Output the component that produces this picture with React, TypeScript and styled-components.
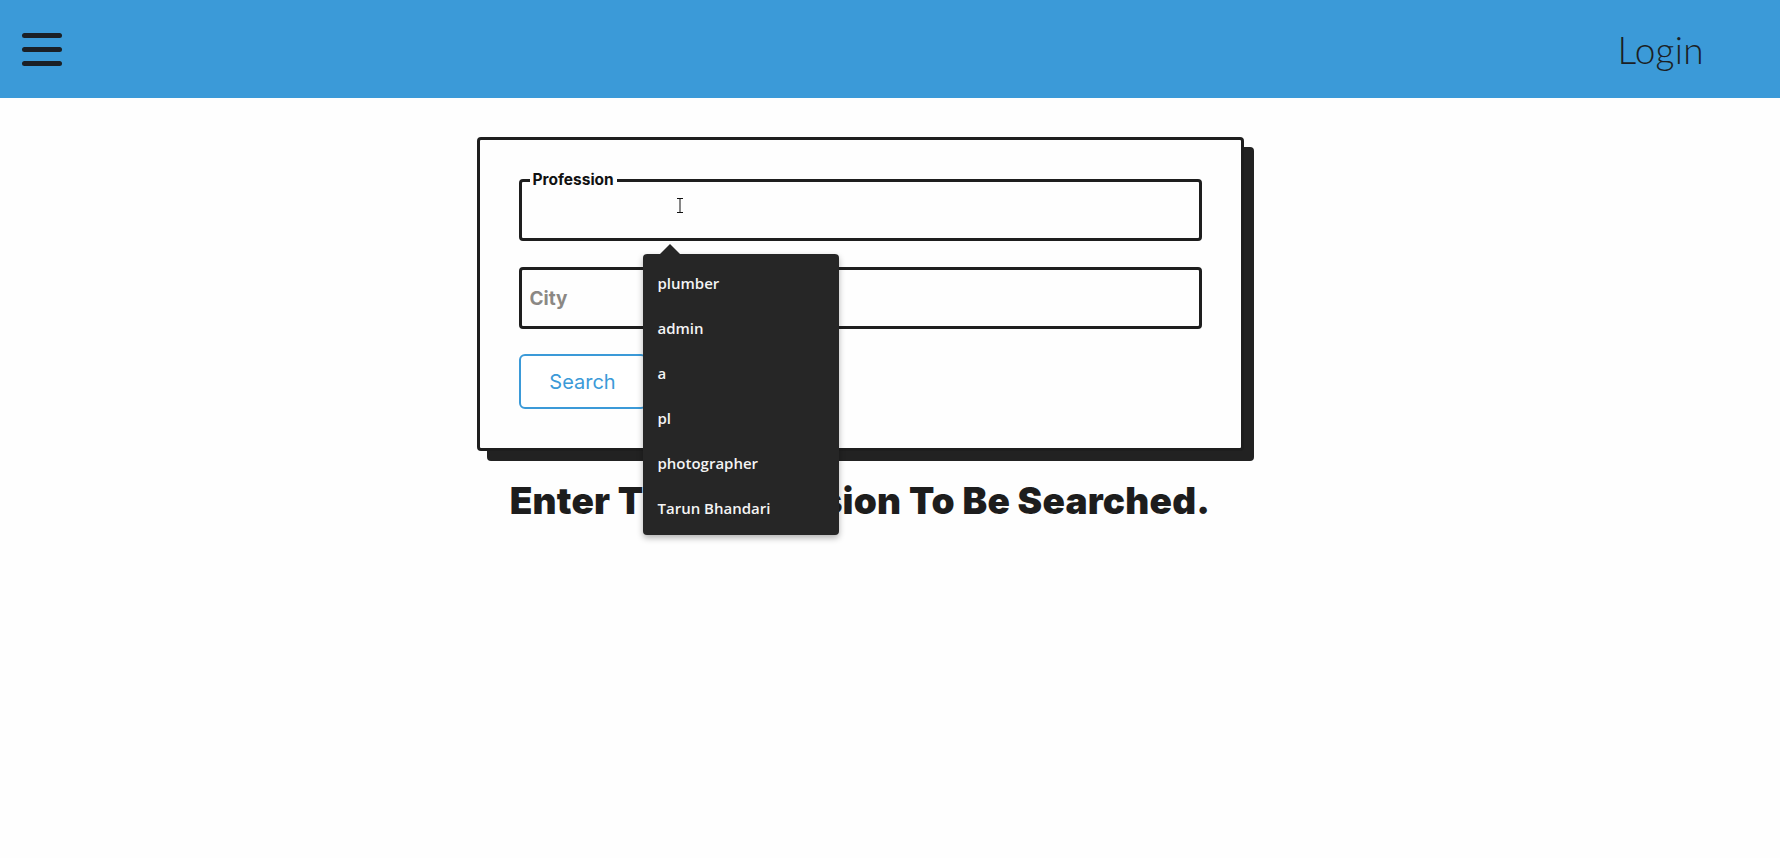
import React from "react";
import styled, { createGlobalStyle } from "styled-components";

const GlobalStyle = createGlobalStyle`
  html, body { margin: 0; padding: 0; background: #fefefe; }
  body { font-family: Inter, "Liberation Sans", sans-serif; }
  * { box-sizing: border-box; }
`;

const Page = styled.div`
  min-height: 100vh;
  display: flex;
  flex-direction: column;
`;

const Header = styled.header`
  height: 98px;
  flex: none;
  background: #3b9ad8;
  display: flex;
  align-items: center;
  justify-content: space-between;
  padding: 0 76px 0 22px;
`;

const MenuButton = styled.button`
  display: flex;
  flex-direction: column;
  gap: 9px;
  padding: 0;
  margin: 0;
  border: 0;
  background: transparent;
  cursor: pointer;
`;

const MenuLine = styled.span`
  display: block;
  width: 40px;
  height: 5px;
  border-radius: 3px;
  background: #1b2026;
`;

const LoginLink = styled.a`
  font-family: Lato, "Open Sans", sans-serif;
  font-weight: 300;
  font-size: 37px;
  color: #1b1f24;
  text-decoration: none;
  letter-spacing: 0.3px;
`;

const Main = styled.main`
  flex: 1;
  display: flex;
  flex-direction: column;
  align-items: center;
  padding: 39px 60px 0 0;
`;

const Card = styled.form`
  width: 767px;
  border: 3px solid #1e1e1e;
  border-radius: 4px;
  background: #fefefe;
  box-shadow: 10px 10px 0 #222;
  padding: 31px 39px 39px;
  display: flex;
  flex-direction: column;
  align-items: flex-start;
  position: relative;
  z-index: 2;
`;

const FieldWrap = styled.div<{ $gap: number }>`
  position: relative;
  width: 100%;
  margin-bottom: ${(p) => p.$gap}px;
`;

const Fieldset = styled.fieldset`
  margin: 0;
  padding: 0 8px;
  border: 3px solid #1e1e1e;
  border-radius: 4px;
  width: 100%;
`;

const Legend = styled.legend`
  padding: 0 3px;
  font-family: Inter, "Liberation Sans", sans-serif;
  font-weight: 700;
  font-size: 15.5px;
  line-height: 18px;
  color: #111;
`;

const TextInput = styled.input<{ $h: number }>`
  display: block;
  width: 100%;
  height: ${(p) => p.$h}px;
  border: 0;
  outline: none;
  background: transparent;
  padding: 0;
  font-family: Inter, "Liberation Sans", sans-serif;
  font-weight: 700;
  font-size: 19px;
  color: #222;
  &::placeholder { color: #8b8884; opacity: 1; }
`;

const SearchButton = styled.button`
  width: 128px;
  height: 55px;
  border: 2px solid #3b9ad8;
  border-radius: 6px;
  background: #fff;
  color: #3b9ad8;
  font-family: Inter, "Liberation Sans", sans-serif;
  font-size: 20px;
  font-weight: 400;
  cursor: pointer;
`;

const Heading = styled.h2`
  margin: 28px 0 0;
  font-family: Inter, "Liberation Sans", sans-serif;
  font-weight: 900;
  font-size: 37px;
  line-height: 1.2;
  color: #1d1d1d;
  letter-spacing: 0.2px;
  position: relative;
  z-index: 1;
`;

const Suggestions = styled.ul`
  position: absolute;
  left: 124px;
  top: calc(100% + 13px);
  width: 196px;
  height: 281px;
  margin: 0;
  padding: 6px 0 5px;
  list-style: none;
  background: #262626;
  border-radius: 4px;
  box-shadow: 0 3px 6px rgba(0, 0, 0, 0.3);
  z-index: 10;
  &::before {
    content: "";
    position: absolute;
    left: 17px;
    top: -10px;
    border-left: 10px solid transparent;
    border-right: 10px solid transparent;
    border-bottom: 10px solid #262626;
  }
`;

const SuggestionItem = styled.li`
  height: 45px;
  display: flex;
  align-items: center;
  padding: 0 15px;
  font-family: "Open Sans", "Noto Sans", sans-serif;
  font-weight: 600;
  font-size: 15px;
  color: #f4f4f4;
`;

const Cursor = styled.svg`
  position: absolute;
  left: 157px;
  top: 27px;
  pointer-events: none;
`;

const suggestions = ["plumber", "admin", "a", "pl", "photographer", "Tarun Bhandari"];

export default function App() {
  return (
    <Page>
      <GlobalStyle />
      <Header>
        <MenuButton aria-label="menu">
          <MenuLine />
          <MenuLine />
          <MenuLine />
        </MenuButton>
        <LoginLink href="#">Login</LoginLink>
      </Header>
      <Main>
        <Card onSubmit={(e) => e.preventDefault()}>
          <FieldWrap $gap={26}>
            <Fieldset>
              <Legend>Profession</Legend>
              <TextInput $h={49} />
            </Fieldset>
            <Cursor width="8" height="15" viewBox="0 0 8 15">
              <path d="M1 0.5h6M1 14.5h6M4 0.5v14" stroke="#111" strokeWidth="1" fill="none" />
            </Cursor>
            <Suggestions>
              {suggestions.map((s) => (
                <SuggestionItem key={s}>{s}</SuggestionItem>
              ))}
            </Suggestions>
          </FieldWrap>
          <FieldWrap $gap={25}>
            <Fieldset>
              <TextInput $h={56} placeholder="City" />
            </Fieldset>
          </FieldWrap>
          <SearchButton type="submit">Search</SearchButton>
        </Card>
        <Heading>Enter The Profession To Be Searched.</Heading>
      </Main>
    </Page>
  );
}
